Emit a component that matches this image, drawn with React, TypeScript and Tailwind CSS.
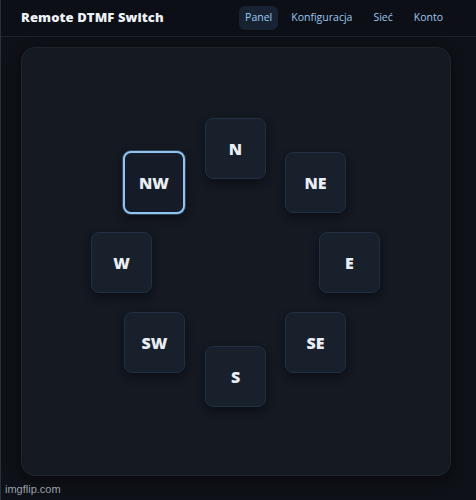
import React from "react";

const dirs: { label: string; x: number; y: number; active?: boolean }[] = [
  { label: "N", x: 0, y: -114 },
  { label: "NE", x: 80, y: -80 },
  { label: "E", x: 114, y: 0 },
  { label: "SE", x: 80, y: 80 },
  { label: "S", x: 0, y: 114 },
  { label: "SW", x: -81, y: 80 },
  { label: "W", x: -114, y: 0 },
  { label: "NW", x: -81, y: -80, active: true },
];

export default function App() {
  return (
    <div
      className="w-[476px] h-[500px] bg-[#0e1117] text-white flex flex-col relative overflow-hidden border-l border-[#2a2f38]"
      style={{ fontFamily: '"Open Sans", "Noto Sans", sans-serif' }}
    >
      <header className="h-[37px] flex items-center justify-between pl-[20px] pr-[25px] border-b border-[#1c222c] bg-[#0c0f15]">
        <div className="text-[13px] font-extrabold text-[#eef2f7] tracking-[0.1px]">Remote DTMF Switch</div>
        <nav className="flex items-center gap-[5px] text-[10.5px] text-[#9cc8f0]">
          <span className="px-[6px] py-[4px] rounded-md bg-[#172332]">Panel</span>
          <span className="px-[8px] py-[4px]">Konfiguracja</span>
          <span className="px-[8px] py-[4px]">Sieć</span>
          <span className="px-[8px] py-[4px]">Konto</span>
        </nav>
      </header>
      <main className="px-[20px] pt-[10px]">
        <div className="relative w-[430px] h-[429px] rounded-[14px] bg-[#141922] border border-[#1e2632] shadow-[0_4px_14px_rgba(0,0,0,0.45)]">
          {dirs.map((d) => (
            <button
              key={d.label}
              className={
                d.active
                  ? "absolute w-[62px] h-[63px] -ml-[31px] -mt-[31px] rounded-[8px] bg-[#151c27] border-2 border-[#8ec3f2] shadow-[0_0_0_1px_rgba(60,80,100,0.8),0_4px_10px_rgba(0,0,0,0.5)] flex items-center justify-center text-[16px] font-extrabold text-[#e9eef4]"
                  : "absolute w-[61px] h-[61px] -ml-[30px] -mt-[30px] rounded-[8px] bg-[#17202b] border border-[#213042] shadow-[0_4px_10px_rgba(0,0,0,0.45)] flex items-center justify-center text-[16px] font-extrabold text-[#e9eef4]"
              }
              style={{ left: 213 + d.x, top: 214 + d.y }}
            >
              {d.label}
            </button>
          ))}
        </div>
      </main>
      <div className="absolute left-[4px] bottom-[3px] text-[11px] text-[#9aa0a8]" style={{ fontFamily: '"Liberation Sans", Arial, sans-serif' }}>
        imgflip.com
      </div>
    </div>
  );
}
